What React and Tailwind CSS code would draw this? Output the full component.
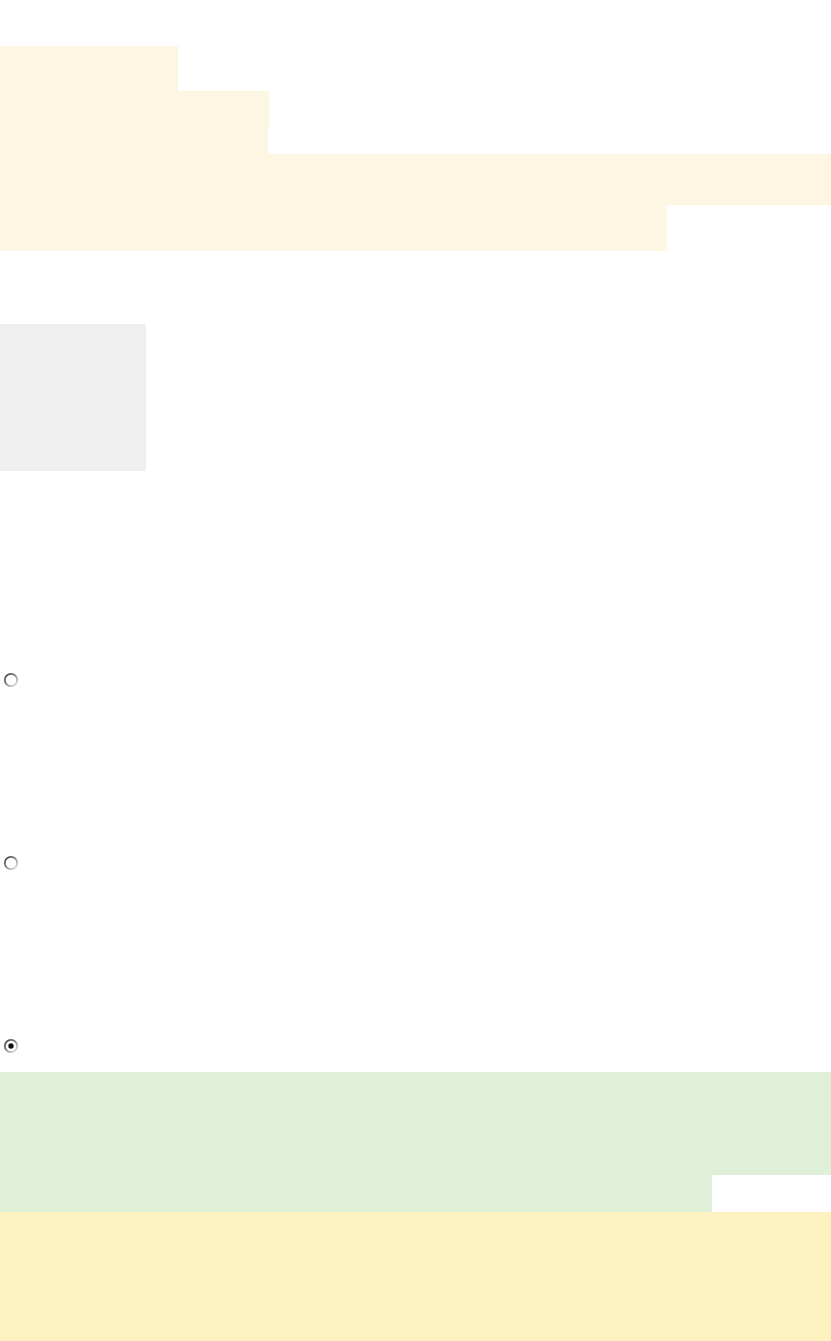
function Radio({ checked }) {
  const id = checked ? "rg1" : "rg0";
  return (
    <svg width="16" height="16" viewBox="0 0 16 16" className="block">
      <defs>
        <linearGradient id={id} x1="0" y1="0" x2="1" y2="1">
          <stop offset="0" stopColor="#3c3c3c" />
          <stop offset="0.5" stopColor="#8a8a8a" />
          <stop offset="1" stopColor="#efefef" />
        </linearGradient>
      </defs>
      <circle cx="8" cy="8" r="6.2" fill="#ffffff" stroke={`url(#${id})`} strokeWidth="1.8" />
      {checked && <circle cx="8" cy="8" r="2.7" fill="#111" />}
    </svg>
  );
}

export default function App() {
  return (
    <div className="w-[831px] min-h-[1341px] bg-white flex flex-col" style={{ fontFamily: '"Liberation Sans", Arial, sans-serif' }}>
      <div className="h-[46px]" />
      <div className="flex flex-col">
        <div className="h-[45px] w-[178px] bg-[#fdf6e3]" />
        <div className="h-[37px] w-[269px] bg-[#fdf6e3]" />
        <div className="h-[26px] w-[268px] bg-[#fdf6e3]" />
        <div className="h-[51px] w-full bg-[#fdf6e3]" />
        <div className="h-[46px] w-[667px] bg-[#fdf6e3]" />
      </div>
      <div className="h-[73px]" />
      <div className="h-[147px] w-[146px] bg-[#efefef]" />
      <div className="h-[199px]" />
      <div className="flex flex-col">
        <div className="h-[183px] pl-[3px] pt-[2px]">
          <Radio />
        </div>
        <div className="h-[183px] pl-[3px] pt-[2px]">
          <Radio />
        </div>
        <div className="h-[36px] pl-[3px] pt-[2px]">
          <Radio checked />
        </div>
      </div>
      <div className="flex flex-col">
        <div className="h-[103px] w-full bg-[#dfefd8]" />
        <div className="h-[37px] w-[712px] bg-[#dfefd8]" />
      </div>
      <div className="h-[129px] w-full bg-[#fef2c1]" />
    </div>
  );
}
